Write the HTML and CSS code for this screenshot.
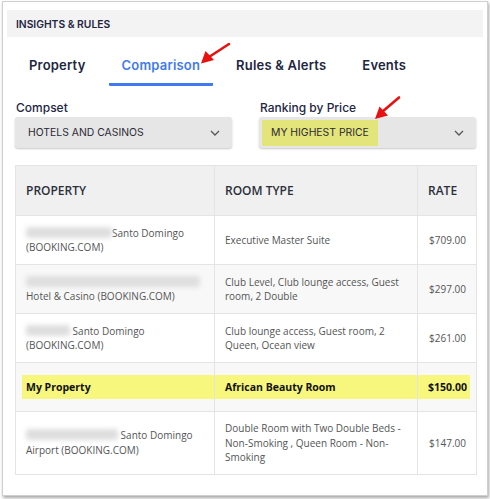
FILE: index.html
```html
<!DOCTYPE html>
<html>
<head>
<meta charset="utf-8">
<link rel="stylesheet" href="styles.css">
</head>
<body>
<div class="frame">
  <div class="band">INSIGHTS &amp; RULES</div>
  <div class="tabs">
    <div class="tab">Property</div>
    <div class="tab active">Comparison</div>
    <div class="tab">Rules &amp; Alerts</div>
    <div class="tab">Events</div>
  </div>
  <div class="filters">
    <div class="field">
      <div class="label">Compset</div>
      <div class="select"><span class="value">HOTELS AND CASINOS</span><svg class="chev" width="10" height="6" viewBox="0 0 10 6"><path d="M1 1l4 4 4-4" fill="none" stroke="#555" stroke-width="1.3"/></svg></div>
    </div>
    <div class="field">
      <div class="label">Ranking by Price</div>
      <div class="select"><span class="value mark">MY HIGHEST PRICE</span><svg class="chev" width="10" height="6" viewBox="0 0 10 6"><path d="M1 1l4 4 4-4" fill="none" stroke="#555" stroke-width="1.3"/></svg></div>
    </div>
  </div>
  <table class="grid">
    <thead>
      <tr><th class="c1">PROPERTY</th><th class="c2">ROOM TYPE</th><th class="c3">RATE</th></tr>
    </thead>
    <tbody>
      <tr><td><span class="blur w86"></span>Santo Domingo<br>(BOOKING.COM)</td><td>Executive Master Suite</td><td class="rate">$709.00</td></tr>
      <tr class="alt"><td><span class="blur w174"></span><br>Hotel &amp; Casino (BOOKING.COM)</td><td>Club Level, Club lounge access, Guest room, 2 Double</td><td class="rate">$297.00</td></tr>
      <tr><td><span class="blur w44"></span> Santo Domingo<br>(BOOKING.COM)</td><td>Club lounge access, Guest room, 2 Queen, Ocean view</td><td class="rate">$261.00</td></tr>
      <tr class="alt mine"><td class="h1">My Property</td><td class="h2">African Beauty Room</td><td class="rate h3">$150.00</td></tr>
      <tr><td><span class="blur w92"></span> Santo Domingo<br>Airport (BOOKING.COM)</td><td>Double Room with Two Double Beds - Non-Smoking , Queen Room - Non-Smoking</td><td class="rate">$147.00</td></tr>
    </tbody>
  </table>
</div>
<svg class="arrows" width="490" height="499" viewBox="0 0 490 499">
  <line x1="229" y1="44" x2="209" y2="57" stroke="#e8110f" stroke-width="2.6" stroke-linecap="round"/>
  <polygon points="201,63.5 205.5,51 214,60" fill="#e8110f"/>
  <line x1="399" y1="97.5" x2="382" y2="112" stroke="#e8110f" stroke-width="2.6" stroke-linecap="round"/>
  <polygon points="375,119 379.5,106.5 388,115.5" fill="#e8110f"/>
</svg>
</body>
</html>
```

FILE: styles.css
```css
html, body {
  margin: 0;
  padding: 0;
  background: #fff;
}
body {
  width: 490px;
  height: 499px;
  position: relative;
  overflow: hidden;
  font-family: Inter, "Noto Sans", sans-serif;
}
.frame {
  box-sizing: border-box;
  margin: 1px 0 0 2px;
  width: 486px;
  height: 495px;
  border: 1px solid #cfcfcf;
  padding: 8px 4px 0 4px;
  box-shadow: 1px 2px 3px rgba(0,0,0,0.35);
  background: #fff;
}
.band {
  height: 27px;
  background: #f3f3f3;
  display: flex;
  align-items: center;
  padding-left: 9px;
  font-size: 10.3px;
  font-weight: 600;
  color: #1e2642;
}
.tabs {
  display: flex;
  gap: 10px;
  padding-left: 9px;
}
.tab {
  padding: 18px 13px 8px;
  font-size: 13px;
  line-height: 20px;
  font-weight: 600;
  letter-spacing: 0.2px;
  color: #1e2642;
  border-bottom: 3px solid transparent;
}
.tab.active {
  color: #3f7bef;
  border-bottom-color: #3f7bef;
  border-radius: 0 0 1px 1px;
}
.filters {
  display: grid;
  grid-template-columns: 217px 217px;
  column-gap: 27px;
  padding-left: 8px;
  margin-top: 14px;
}
.label {
  font-size: 12px;
  line-height: 16px;
  font-weight: 500;
  color: #1e2642;
  margin: 0 0 1px 1px;
}
.select {
  height: 31px;
  background: #e6e6e6;
  border-radius: 3px;
  box-shadow: 0 1px 2px rgba(0,0,0,0.22);
  display: flex;
  align-items: center;
  justify-content: space-between;
  padding: 0 12px 0 13px;
  font-size: 10.4px;
  color: #2b2b35;
}
.value.mark {
  background: #e3e479;
  height: 26px;
  display: flex;
  align-items: center;
  margin-left: -10px;
  padding: 0 9px;
}
.chev {
  display: block;
}
.grid {
  margin: 17px 0 0 8px;
  width: 461px;
  border-collapse: collapse;
  table-layout: fixed;
  border: 1px solid #e4e4e4;
  font-family: "Open Sans", "Noto Sans", sans-serif;
}
.grid th {
  height: 50px;
  box-sizing: border-box;
  background: #f0f0f0;
  text-align: left;
  padding: 0 10px;
  font-size: 12px;
  font-weight: 600;
  color: #2c2f3a;
  border-left: 1px solid #e4e4e4;
}
.c1 { width: 199px; }
.c2 { width: 203px; }
.c3 { width: 59px; }
.grid td {
  height: 49px;
  box-sizing: border-box;
  padding: 9px 10px;
  font-size: 10px;
  line-height: 14.5px;
  color: #555;
  border-top: 1px solid #e4e4e4;
  border-left: 1px solid #e4e4e4;
  vertical-align: middle;
}
.grid td.rate {
  text-align: right;
}
.alt td {
  background-color: #f8f8f8;
}
.mine td {
  font-weight: 700;
  color: #111;
  font-size: 10.5px;
  background-image: linear-gradient(#f7f77e, #f7f77e);
  background-repeat: no-repeat;
  background-size: 100% 24px;
  background-position: 0 center;
}
.mine td.h1 {
  background-size: calc(100% - 6px) 24px;
  background-position: 6px center;
}
.mine td.h3 {
  background-size: calc(100% - 6px) 24px;
  background-position: 0 center;
}
.blur {
  display: inline-block;
  height: 11px;
  vertical-align: -1px;
  background: #dedede;
  filter: blur(2.5px);
  border-radius: 3px;
}
.w86 { width: 86px; }
.w174 { width: 174px; }
.w44 { width: 44px; }
.w92 { width: 92px; }
.arrows {
  position: absolute;
  left: 0;
  top: 0;
  pointer-events: none;
}
```
